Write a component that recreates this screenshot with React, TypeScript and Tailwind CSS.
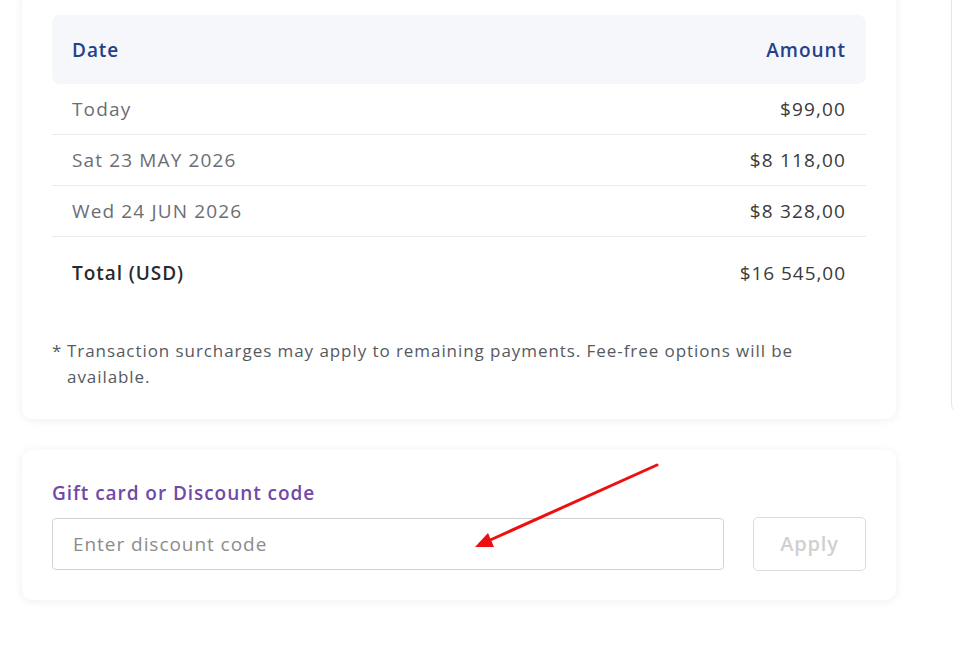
const rows = [
  { date: 'Today', amount: '$99,00' },
  { date: 'Sat 23 MAY 2026', amount: '$8 118,00' },
  { date: 'Wed 24 JUN 2026', amount: '$8 328,00' },
]

export default function App() {
  return (
    <div
      className="relative h-[654px] w-[954px] overflow-hidden bg-white"
      style={{ fontFamily: '"Open Sans", "Noto Sans", sans-serif' }}
    >
      <div className="flex gap-[55px] pl-[22px]">
        <div className="flex w-[874px] shrink-0 flex-col gap-[31px]">
          {/* schedule card */}
          <div className="-mt-[15px] rounded-[10px] bg-white px-[30px] pt-[30px] pb-[29px] shadow-[0_1px_10px_rgba(0,0,0,0.07)]">
            <div className="flex h-[69px] items-center justify-between rounded-[8px] bg-[#f5f7fb] px-[20px] pt-[2px] text-[19px] font-semibold tracking-[0.05em] text-[#24408a]">
              <span>Date</span>
              <span>Amount</span>
            </div>
            {rows.map((r) => (
              <div
                key={r.date}
                className="flex h-[51px] items-center justify-between border-b border-[#ebebeb] px-[20px] text-[19px] tracking-[0.06em]"
              >
                <span className="text-[#6b6e75]">{r.date}</span>
                <span className="text-[#3a3a3a]">{r.amount}</span>
              </div>
            ))}
            <div className="flex h-[72px] items-center justify-between px-[20px] text-[19px] tracking-[0.05em]">
              <span className="font-semibold text-[#2a2a2a]">Total (USD)</span>
              <span className="text-[#3a3a3a]">$16 545,00</span>
            </div>
            <div className="mt-[29px] flex text-[17px] leading-[26px] tracking-[0.055em] text-[#555a61]">
              <span className="w-[15px] shrink-0 tracking-normal">*</span>
              <p>
                Transaction surcharges may apply to remaining payments. Fee-free options will be
                available.
              </p>
            </div>
          </div>

          {/* discount card */}
          <div className="rounded-[10px] bg-white px-[30px] pt-[31px] pb-[29px] shadow-[0_1px_10px_rgba(0,0,0,0.07)]">
            <div className="mb-[12px] text-[19px] font-semibold leading-[24px] tracking-[0.05em] text-[#7149a9]">
              Gift card or Discount code
            </div>
            <div className="flex items-center gap-[29px]">
              <input
                className="h-[52px] flex-1 rounded-[4px] border border-[#d2d2d2] px-[20px] text-[19px] tracking-[0.05em] outline-none placeholder:text-[#8c8c8c]"
                placeholder="Enter discount code"
              />
              <button className="h-[54px] w-[113px] rounded-[5px] border border-[#dcdcdc] bg-white text-[20px] font-semibold tracking-[0.04em] text-[#d0d0d0]">
                Apply
              </button>
            </div>
          </div>
        </div>

        {/* neighbouring panel */}
        <div className="-mt-[20px] h-[434px] w-[200px] shrink-0 rounded-[10px] border border-[#e6e6e6] bg-white" />
      </div>

      <svg className="pointer-events-none absolute top-0 left-0" width="954" height="654">
        <line x1="657" y1="465" x2="488" y2="541" stroke="#ee1010" strokeWidth="3" strokeLinecap="round" />
        <polygon points="475,547 488,533 494,547" fill="#ee1010" />
      </svg>
    </div>
  )
}
